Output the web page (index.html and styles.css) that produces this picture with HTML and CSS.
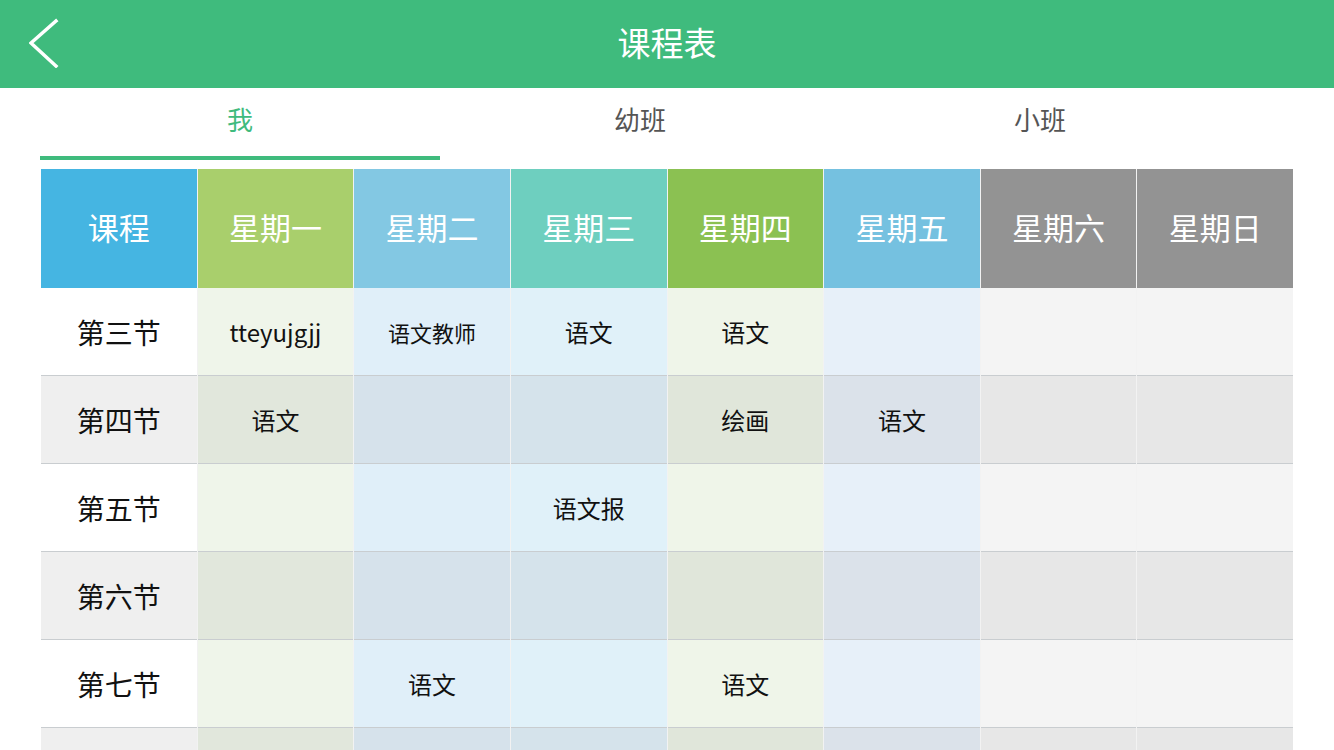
FILE: index.html
```html
<!DOCTYPE html>
<html lang="zh-CN">
<head>
    <meta charset="UTF-8">
    <title>课程表</title>
    <link rel="stylesheet" href="styles.css">
</head>
<body>
    <!-- 顶部导航 -->
    <div class="nav-bar">
        <span class="nav-back">
            <svg width="40" height="60" viewBox="0 0 40 60"><polyline points="27,13 2,35 27,58" fill="none" stroke="#fff" stroke-width="3.5" stroke-linecap="square"/></svg>
        </span>
        <span class="nav-title">课程表</span>
    </div>

    <!-- 班级切换 -->
    <div class="tabs">
        <div class="tab active">我</div>
        <div class="tab">幼班</div>
        <div class="tab">小班</div>
    </div>

    <!-- 课程表格 -->
    <div class="schedule">
        <div class="th c0">课程</div>
        <div class="th c1">星期一</div>
        <div class="th c2">星期二</div>
        <div class="th c3">星期三</div>
        <div class="th c4">星期四</div>
        <div class="th c5">星期五</div>
        <div class="th c6">星期六</div>
        <div class="th c7">星期日</div>

        <div class="td c0 row-label">第三节</div>
        <div class="td c1">tteyujgjj</div>
        <div class="td c2 small">语文教师</div>
        <div class="td c3">语文</div>
        <div class="td c4">语文</div>
        <div class="td c5"></div>
        <div class="td c6"></div>
        <div class="td c7"></div>

        <div class="td c0 row-label even">第四节</div>
        <div class="td c1 even">语文</div>
        <div class="td c2 even"></div>
        <div class="td c3 even"></div>
        <div class="td c4 even">绘画</div>
        <div class="td c5 even">语文</div>
        <div class="td c6 even"></div>
        <div class="td c7 even"></div>

        <div class="td c0 row-label">第五节</div>
        <div class="td c1"></div>
        <div class="td c2"></div>
        <div class="td c3">语文报</div>
        <div class="td c4"></div>
        <div class="td c5"></div>
        <div class="td c6"></div>
        <div class="td c7"></div>

        <div class="td c0 row-label even">第六节</div>
        <div class="td c1 even"></div>
        <div class="td c2 even"></div>
        <div class="td c3 even"></div>
        <div class="td c4 even"></div>
        <div class="td c5 even"></div>
        <div class="td c6 even"></div>
        <div class="td c7 even"></div>

        <div class="td c0 row-label">第七节</div>
        <div class="td c1"></div>
        <div class="td c2">语文</div>
        <div class="td c3"></div>
        <div class="td c4">语文</div>
        <div class="td c5"></div>
        <div class="td c6"></div>
        <div class="td c7"></div>

        <!-- 下一行只露出顶部 -->
        <div class="td c0 even"></div>
        <div class="td c1 even"></div>
        <div class="td c2 even"></div>
        <div class="td c3 even"></div>
        <div class="td c4 even"></div>
        <div class="td c5 even"></div>
        <div class="td c6 even"></div>
        <div class="td c7 even"></div>
    </div>
</body>
</html>
```

FILE: styles.css
```css
body {
    margin: 0;
    font-family: "Noto Sans CJK SC", "Noto Sans", sans-serif;
    background-color: #fff;
    overflow: hidden;
    height: 750px;
}
.nav-bar {
    position: relative;
    height: 88px;
    background-color: #3fbb7d;
    display: flex;
    align-items: center;
    justify-content: center;
}
.nav-back {
    position: absolute;
    left: 29px;
    top: 8px;
}
.nav-title {
    color: #fff;
    font-size: 33px;
    line-height: 1;
    margin-bottom: 3px;
}
.tabs {
    display: flex;
    margin: 0 94px 0 40px;
    height: 72px;
}
.tab {
    flex: 1;
    display: flex;
    align-items: center;
    justify-content: center;
    font-size: 26px;
    color: #555;
    padding-bottom: 8px;
    box-sizing: border-box;
    border-bottom: 4px solid transparent;
}
.tab.active {
    color: #3fbb7d;
    border-bottom-color: #3fbb7d;
}
.schedule {
    display: grid;
    grid-template-columns: repeat(8, 1fr);
    column-gap: 1px;
    margin: 9px 41px 0 41px;
    width: 1252px;
    background-color: #f2f2f2;
}
.th {
    height: 119px;
    display: flex;
    align-items: center;
    justify-content: center;
    color: #fff;
    font-size: 31px;
    padding-bottom: 4px;
    box-sizing: border-box;
}
.th.c0 { background-color: #45b5e2; }
.th.c1 { background-color: #a9cf6c; }
.th.c2 { background-color: #83c8e3; }
.th.c3 { background-color: #6ecfbf; }
.th.c4 { background-color: #8bc152; }
.th.c5 { background-color: #75c1e0; }
.th.c6 { background-color: #939393; }
.th.c7 { background-color: #939393; }
.td {
    height: 87px;
    display: flex;
    align-items: center;
    justify-content: center;
    color: #111;
    font-size: 24px;
    border-bottom: 1px solid #c9cdd0;
}
.td.small {
    font-size: 22px;
}
.row-label {
    font-size: 28px;
}
.td.c0 { background-color: #fff; }
.td.c1 { background-color: #eff5ea; }
.td.c2 { background-color: #e0eff9; }
.td.c3 { background-color: #e0f1f9; }
.td.c4 { background-color: #eff5e9; }
.td.c5 { background-color: #e7f0f9; }
.td.c6 { background-color: #f4f4f4; }
.td.c7 { background-color: #f4f4f4; }
.td.c0.even { background-color: #efefef; }
.td.c1.even { background-color: #e1e7dc; }
.td.c2.even { background-color: #d6e2eb; }
.td.c3.even { background-color: #d5e3eb; }
.td.c4.even { background-color: #e0e6da; }
.td.c5.even { background-color: #dbe2ea; }
.td.c6.even { background-color: #e7e7e7; }
.td.c7.even { background-color: #e7e7e7; }
```
